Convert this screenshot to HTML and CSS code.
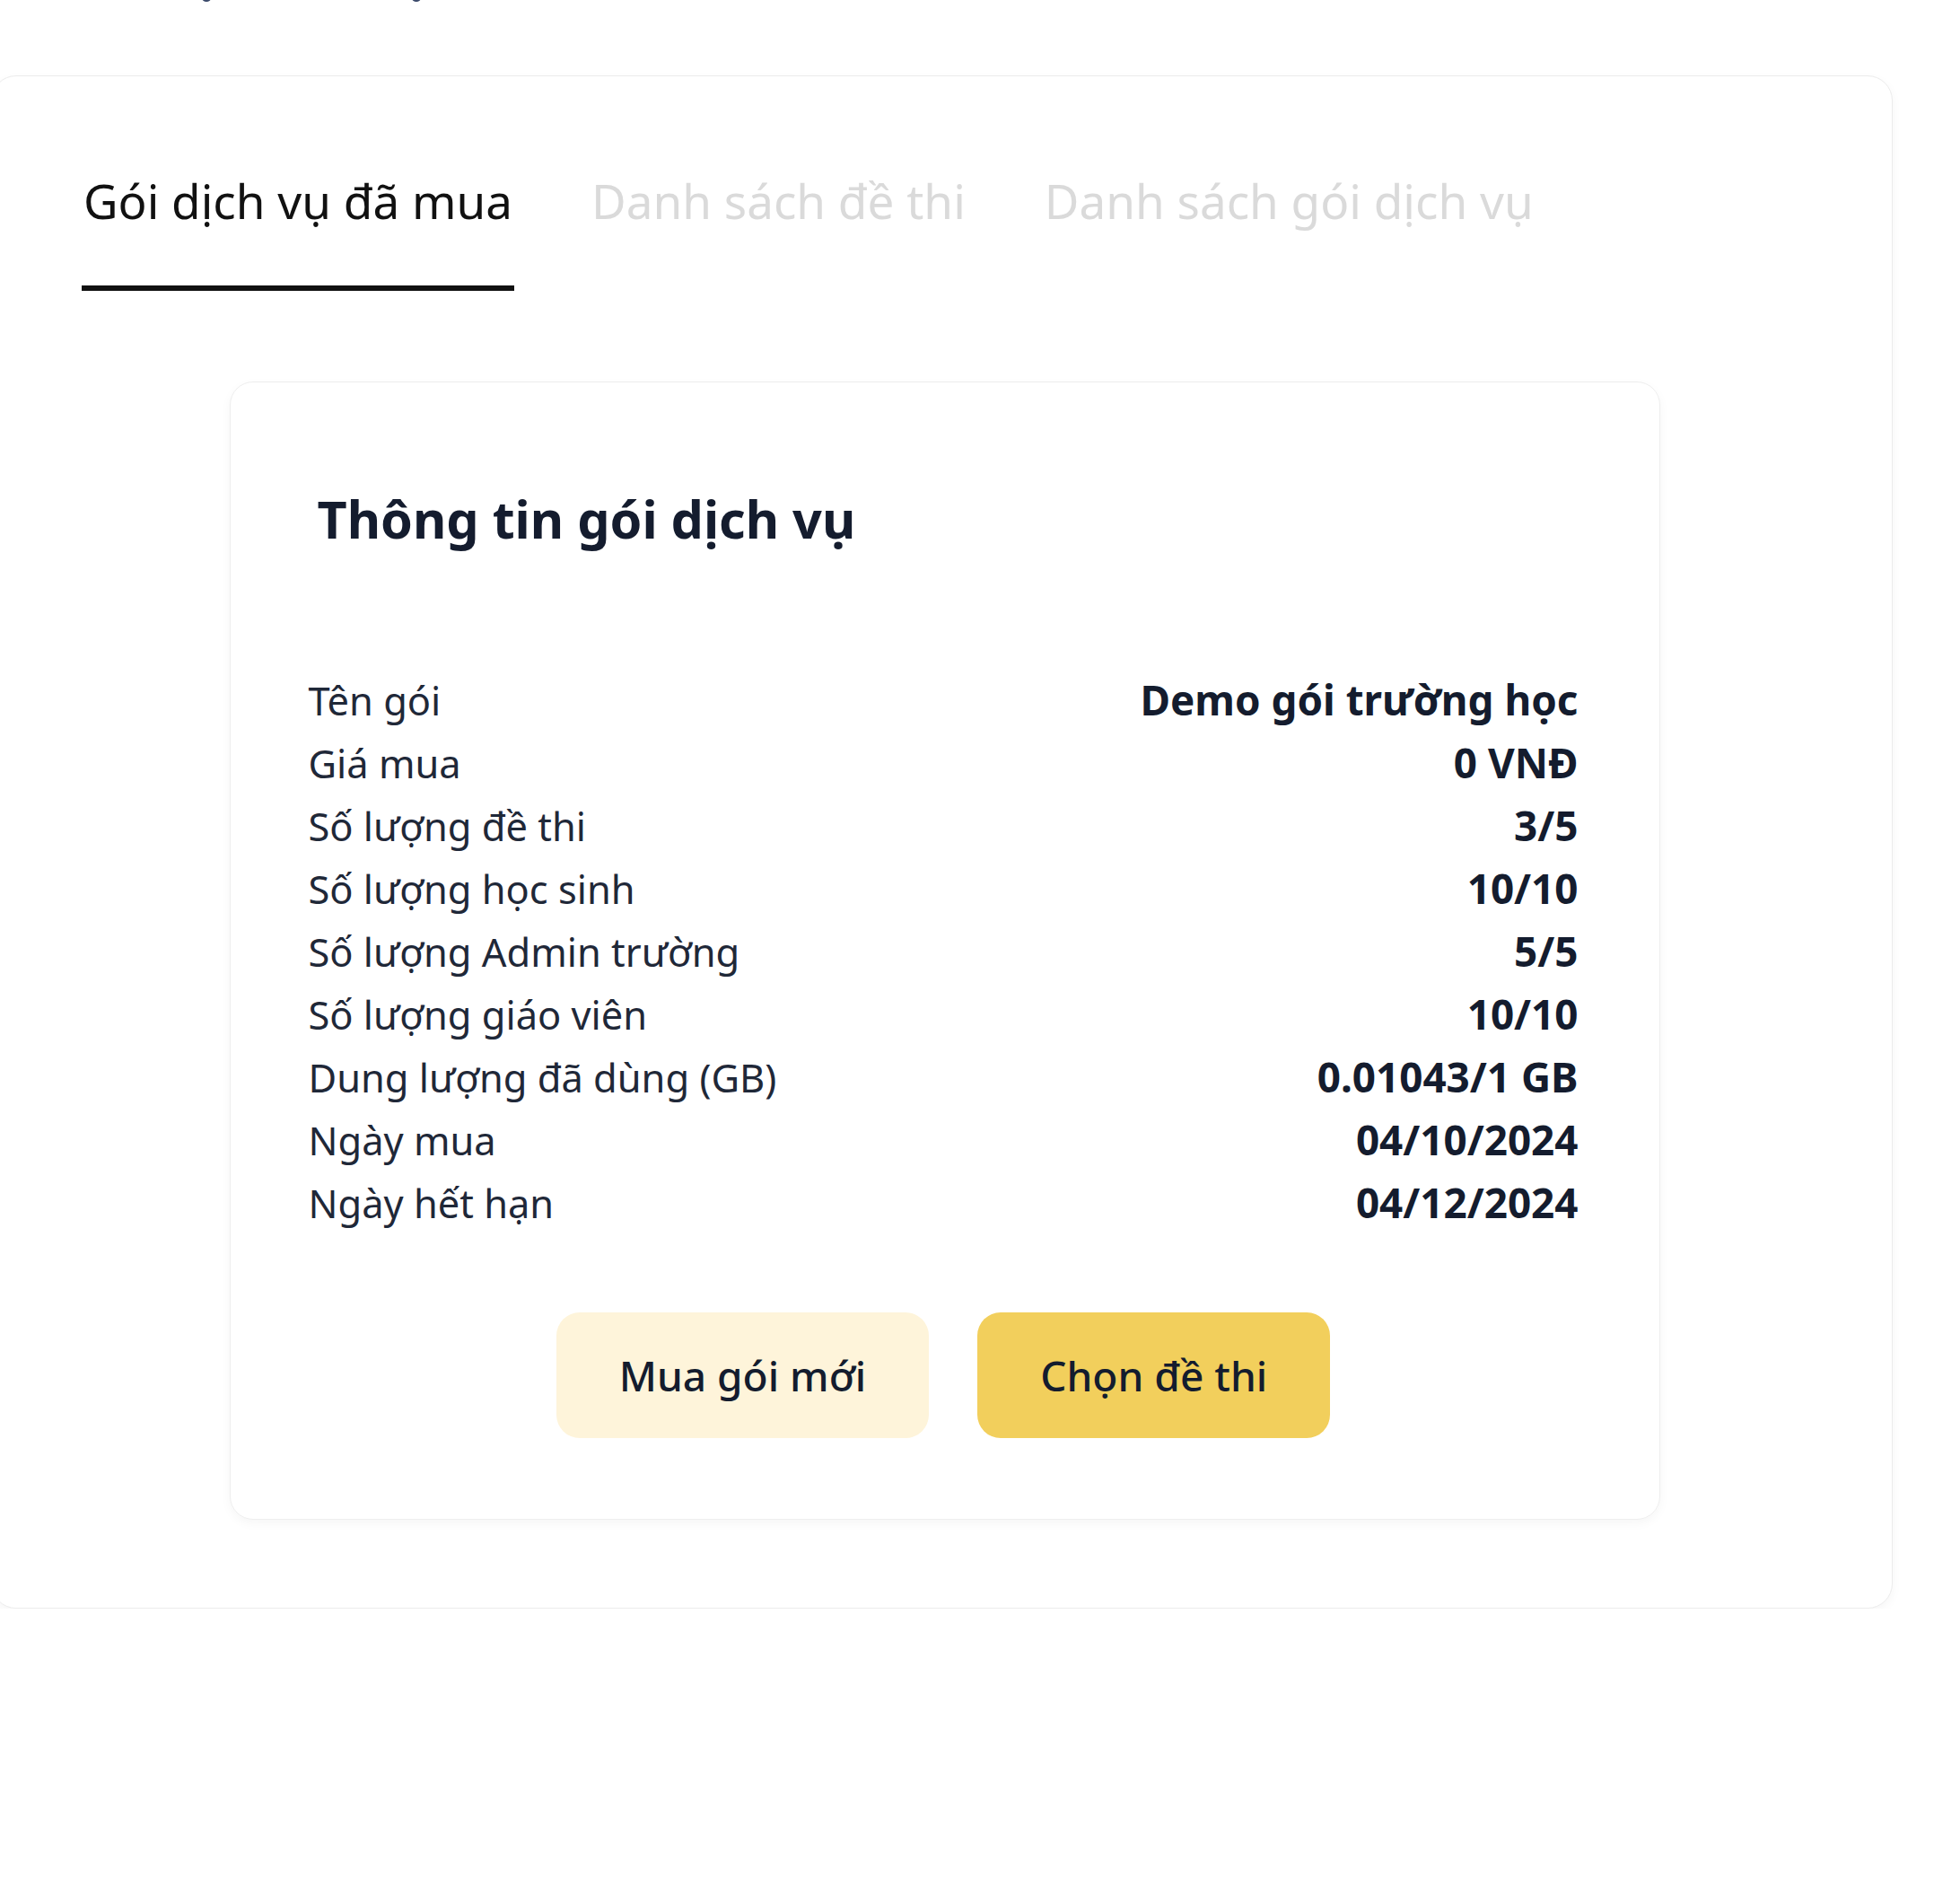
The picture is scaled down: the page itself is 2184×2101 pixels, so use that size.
FILE: index.html
```html
<!DOCTYPE html>
<html lang="vi">
<head>
    <meta charset="UTF-8">
    <meta name="viewport" content="width=device-width, initial-scale=1.0">
    <title>Gói dịch vụ</title>
    <link rel="stylesheet" href="styles.css">
</head>
<body>

    <h1 class="page-title">Lịch sử đặt mua</h1>

    <section class="panel">
        <!-- Tabs -->
        <nav class="tabs">
            <button class="tab active">Gói dịch vụ đã mua</button>
            <button class="tab">Danh sách đề thi</button>
            <button class="tab">Danh sách gói dịch vụ</button>
        </nav>

        <!-- Thông tin gói đã mua -->
        <div class="package-card">
            <h2 class="package-title">Thông tin gói dịch vụ</h2>

            <dl class="info-list">
                <div class="info-row"><dt>Tên gói</dt><dd>Demo gói trường học</dd></div>
                <div class="info-row"><dt>Giá mua</dt><dd>0 VNĐ</dd></div>
                <div class="info-row"><dt>Số lượng đề thi</dt><dd>3/5</dd></div>
                <div class="info-row"><dt>Số lượng học sinh</dt><dd>10/10</dd></div>
                <div class="info-row"><dt>Số lượng Admin trường</dt><dd>5/5</dd></div>
                <div class="info-row"><dt>Số lượng giáo viên</dt><dd>10/10</dd></div>
                <div class="info-row"><dt>Dung lượng đã dùng (GB)</dt><dd>0.01043/1 GB</dd></div>
                <div class="info-row"><dt>Ngày mua</dt><dd>04/10/2024</dd></div>
                <div class="info-row"><dt>Ngày hết hạn</dt><dd>04/12/2024</dd></div>
            </dl>

            <div class="actions">
                <button class="btn btn-light">Mua gói mới</button>
                <button class="btn btn-primary">Chọn đề thi</button>
            </div>
        </div>
    </section>

</body>
</html>
```

FILE: styles.css
```css
body {
    font-family: "Noto Sans", "Open Sans", sans-serif;
    margin: 0;
    padding: 0;
    background-color: #fff;
    color: #1a2233;
}

/* tiêu đề trang, phần lớn nằm phía trên khung nhìn */
.page-title {
    margin: -61px 0 0 0;
    padding-left: 189px;
    font-size: 58px;
    line-height: 1;
    font-weight: 700;
    color: #3b4a6b;
    white-space: nowrap;
}

.panel {
    margin: 87px 75px 0 -10px;
    padding: 102px 94px 98px 100px;
    background-color: #fff;
    border: 1px solid #ececec;
    border-radius: 28px;
    box-shadow: 0 4px 12px rgba(0, 0, 0, 0.04);
}

.tabs {
    display: flex;
    gap: 84px;
}

.tab {
    font-family: inherit;
    font-size: 53px;
    line-height: normal;
    background: none;
    border: none;
    border-bottom: 6px solid transparent;
    padding: 0 2px 58px 2px;
    color: #dadada;
    cursor: pointer;
}

.tab.active {
    color: #111;
    border-bottom-color: #111;
}

.package-card {
    box-sizing: border-box;
    width: 1594px;
    margin: 101px auto 0 auto;
    padding: 113px 90px 90px 87px;
    border: 1px solid #eeeeee;
    border-radius: 26px;
    box-shadow: 0 4px 12px rgba(0, 0, 0, 0.04);
}

.package-title {
    margin: 0 0 0 10px;
    font-size: 57.5px;
    font-weight: 700;
    line-height: 79px;
    color: #141c2e;
}

.info-list {
    margin: 126px 0 0 0;
    padding: 0;
}

.info-row {
    display: flex;
    justify-content: space-between;
    align-items: baseline;
    height: 70px;
    font-size: 43.4px;
    line-height: 70px;
}

.info-row dt {
    margin: 0;
    color: #1f2838;
}

.info-row dd {
    margin: 0;
    font-size: 45.8px;
    font-weight: 700;
    color: #141c2e;
}

.actions {
    display: flex;
    justify-content: center;
    gap: 54px;
    margin-top: 88px;
}

.btn {
    font-family: inherit;
    font-size: 46px;
    font-weight: 500;
    line-height: normal;
    padding: 39px 70px;
    border: none;
    border-radius: 26px;
    color: #141c2e;
    cursor: pointer;
}

.btn-light {
    background-color: #fef4da;
}

.btn-primary {
    background-color: #f2cf5c;
}
```
